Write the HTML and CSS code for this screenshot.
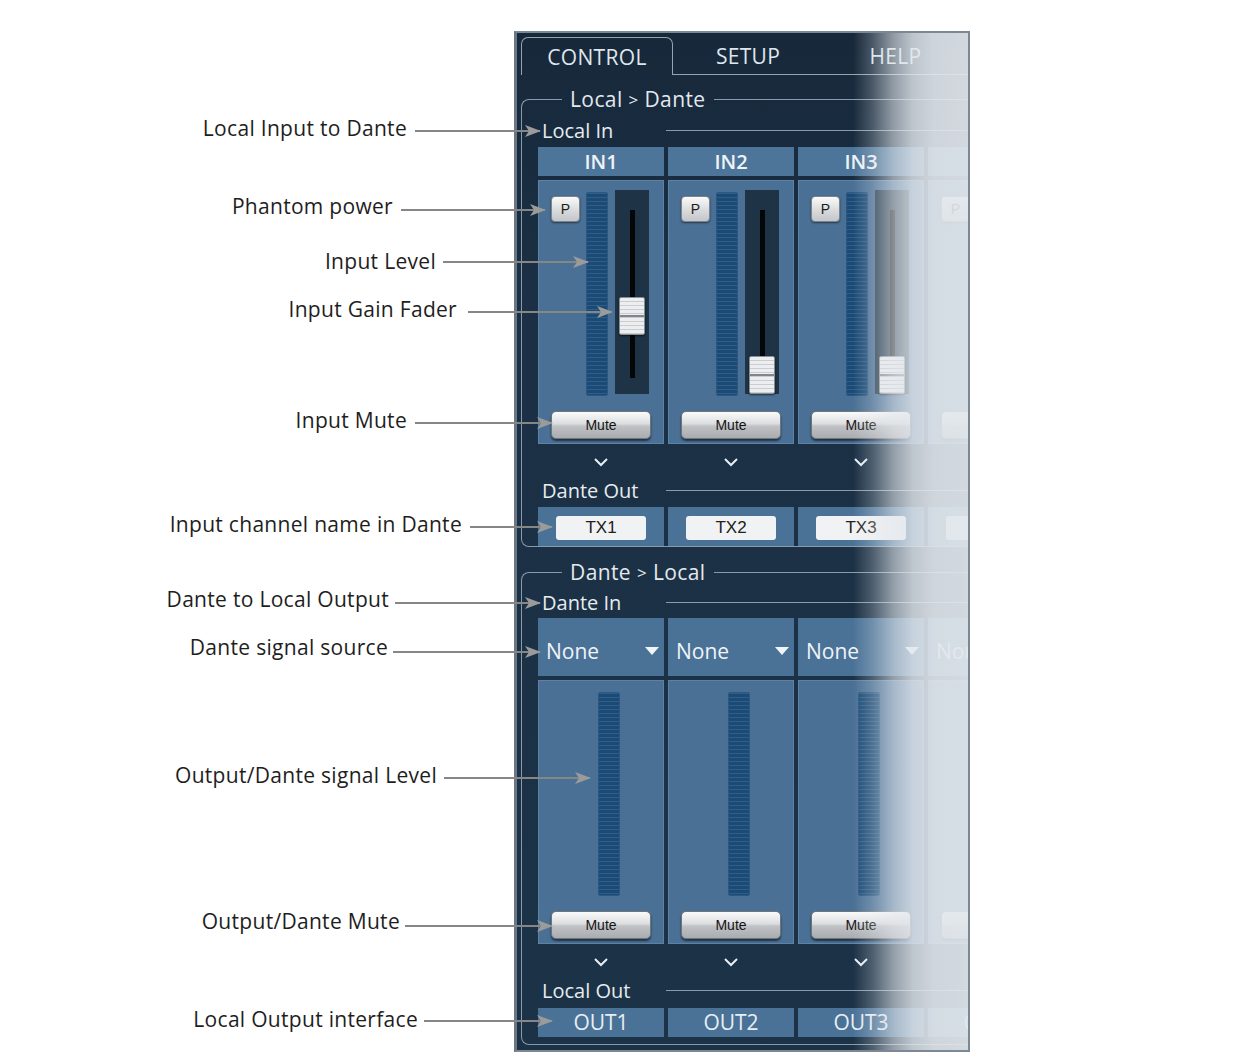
FILE: index.html
```html
<!DOCTYPE html>
<html lang="en">
<head>
    <meta charset="UTF-8">
    <title>Dante Interface - Control</title>
    <link rel="stylesheet" href="styles.css">
</head>
<body>
<div class="stage">
    <div class="panel">
        <!-- Tab bar -->
        <div class="tabs">
            <div class="tab active">CONTROL</div>
            <div class="tab">SETUP</div>
            <div class="tab">HELP</div>
        </div>

        <!-- Local inputs sent to the network -->
        <fieldset class="group">
            <legend>Local <span class="gt">&gt;</span> Dante</legend>
            <div class="section"><span>Local In</span></div>
            <div class="row heads">
                <div class="cell head">IN1</div>
                <div class="cell head">IN2</div>
                <div class="cell head">IN3</div>
                <div class="cell head">IN4</div>
            </div>
            <div class="row strips">
                <div class="cell strip">
                    <div class="strip-top">
                        <button class="phantom">P</button>
                        <div class="meter"></div>
                        <div class="fader"><div class="knob" style="top:107px"></div></div>
                    </div>
                    <button class="mute">Mute</button>
                </div>
                <div class="cell strip">
                    <div class="strip-top">
                        <button class="phantom">P</button>
                        <div class="meter"></div>
                        <div class="fader"><div class="knob" style="top:166px"></div></div>
                    </div>
                    <button class="mute">Mute</button>
                </div>
                <div class="cell strip">
                    <div class="strip-top">
                        <button class="phantom">P</button>
                        <div class="meter"></div>
                        <div class="fader"><div class="knob" style="top:166px"></div></div>
                    </div>
                    <button class="mute">Mute</button>
                </div>
                <div class="cell strip">
                    <div class="strip-top">
                        <button class="phantom">P</button>
                        <div class="meter"></div>
                        <div class="fader"><div class="knob" style="top:166px"></div></div>
                    </div>
                    <button class="mute">Mute</button>
                </div>
            </div>
            <div class="row chevrons">
                <div class="chev"><svg width="14" height="9"><polyline points="1,1 7,7 13,1"/></svg></div>
                <div class="chev"><svg width="14" height="9"><polyline points="1,1 7,7 13,1"/></svg></div>
                <div class="chev"><svg width="14" height="9"><polyline points="1,1 7,7 13,1"/></svg></div>
                <div class="chev"><svg width="14" height="9"><polyline points="1,1 7,7 13,1"/></svg></div>
            </div>
            <div class="section"><span>Dante Out</span></div>
            <div class="row names">
                <div class="cell name"><div class="txname">TX1</div></div>
                <div class="cell name"><div class="txname">TX2</div></div>
                <div class="cell name"><div class="txname">TX3</div></div>
                <div class="cell name"><div class="txname">TX4</div></div>
            </div>
        </fieldset>

        <!-- Network channels routed to local outputs -->
        <fieldset class="group second">
            <legend>Dante <span class="gt">&gt;</span> Local</legend>
            <div class="section"><span>Dante In</span></div>
            <div class="row sources">
                <div class="cell source"><span>None</span><i class="caret"></i></div>
                <div class="cell source"><span>None</span><i class="caret"></i></div>
                <div class="cell source"><span>None</span><i class="caret"></i></div>
                <div class="cell source"><span>None</span><i class="caret"></i></div>
            </div>
            <div class="row strips">
                <div class="cell strip">
                    <div class="strip-top out"><div class="meter"></div></div>
                    <button class="mute">Mute</button>
                </div>
                <div class="cell strip">
                    <div class="strip-top out"><div class="meter"></div></div>
                    <button class="mute">Mute</button>
                </div>
                <div class="cell strip">
                    <div class="strip-top out"><div class="meter"></div></div>
                    <button class="mute">Mute</button>
                </div>
                <div class="cell strip">
                    <div class="strip-top out"><div class="meter"></div></div>
                    <button class="mute">Mute</button>
                </div>
            </div>
            <div class="row chevrons">
                <div class="chev"><svg width="14" height="9"><polyline points="1,1 7,7 13,1"/></svg></div>
                <div class="chev"><svg width="14" height="9"><polyline points="1,1 7,7 13,1"/></svg></div>
                <div class="chev"><svg width="14" height="9"><polyline points="1,1 7,7 13,1"/></svg></div>
                <div class="chev"><svg width="14" height="9"><polyline points="1,1 7,7 13,1"/></svg></div>
            </div>
            <div class="section"><span>Local Out</span></div>
            <div class="row outs">
                <div class="cell outname">OUT1</div>
                <div class="cell outname">OUT2</div>
                <div class="cell outname">OUT3</div>
                <div class="cell outname">OUT4</div>
            </div>
        </fieldset>

        <div class="fade"></div>
    </div>

    <!-- Callout labels with leader arrows -->
    <svg class="callouts" width="1255" height="1064">
        <defs>
            <marker id="tip" viewBox="0 0 16 12" refX="15" refY="6" markerWidth="16" markerHeight="12" markerUnits="userSpaceOnUse" orient="auto">
                <path d="M0 0 L16 6 L0 12 L4 6 Z"/>
            </marker>
        </defs>
        <g class="labels">
            <text x="407" y="136">Local Input to Dante</text>
            <text x="393" y="214">Phantom power</text>
            <text x="436" y="269">Input Level</text>
            <text x="457" y="317">Input Gain Fader</text>
            <text x="407" y="428">Input Mute</text>
            <text x="462" y="532">Input channel name in Dante</text>
            <text x="389" y="607">Dante to Local Output</text>
            <text x="388" y="655">Dante signal source</text>
            <text x="437" y="783">Output/Dante signal Level</text>
            <text x="400" y="929">Output/Dante Mute</text>
            <text x="418" y="1027">Local Output interface</text>
        </g>
        <g class="leaders">
            <line x1="415" y1="131" x2="540" y2="131"/>
            <line x1="401" y1="210" x2="545" y2="210"/>
            <line x1="443" y1="262" x2="588" y2="262"/>
            <line x1="468" y1="312" x2="612" y2="312"/>
            <line x1="415" y1="423" x2="552" y2="423"/>
            <line x1="470" y1="527" x2="552" y2="527"/>
            <line x1="395" y1="603" x2="540" y2="603"/>
            <line x1="393" y1="652" x2="540" y2="652"/>
            <line x1="444" y1="778" x2="590" y2="778"/>
            <line x1="405" y1="926" x2="552" y2="926"/>
            <line x1="424" y1="1021" x2="552" y2="1021"/>
        </g>
    </svg>
</div>
</body>
</html>
```

FILE: styles.css
```css
body {
    margin: 0;
    background: #ffffff;
    font-family: 'Open Sans', 'Liberation Sans', sans-serif;
}

.stage {
    position: relative;
    width: 1255px;
    height: 1064px;
    padding: 31px 0 0 514px;
    box-sizing: border-box;
}

/* Main panel */
.panel {
    position: relative;
    width: 456px;
    height: 1021px;
    box-sizing: border-box;
    overflow: hidden;
    padding: 4px 0 0 4px;
    border: 2px solid #7c8994;
    border-left: 3px solid #6b7884;
    background: linear-gradient(#17283a 0%, #1b3044 25%, #1c3246 100%);
    color: #e4eaef;
}

.tabs {
    display: flex;
    height: 38px;
}

.tab {
    width: 150px;
    box-sizing: border-box;
    border-bottom: 1px solid #95a4b1;
    font-size: 21px;
    letter-spacing: 0.3px;
    line-height: 38px;
    text-align: center;
    color: #dfe6ec;
}

.tab.active {
    width: 152px;
    border: 1px solid #95a4b1;
    border-bottom: none;
    border-radius: 7px 7px 0 0;
}

.tab:last-child {
    flex: 1;
}

/* Group boxes */
.group {
    width: 480px;
    box-sizing: border-box;
    min-width: 0;
    margin: 12px 0 0 0;
    padding: 6px 0 0 16px;
    border: 1px solid #8a9aa8;
    border-right: none;
    border-radius: 8px 0 0 8px;
}

.group.second {
    margin-top: 13px;
    padding-top: 5px;
    padding-bottom: 7px;
}

.group legend {
    margin-left: 24px;
    padding: 0 8px;
    font-size: 21px;
    letter-spacing: 0.4px;
    line-height: 24px;
    color: #e3e9ee;
}

.gt {
    font-size: 17px;
    vertical-align: 1px;
}

.section {
    display: flex;
    align-items: center;
    height: 24px;
    font-size: 20px;
    color: #e6ecf1;
}

.section span {
    flex: none;
    width: 128px;
    padding-left: 4px;
    box-sizing: border-box;
}

.section::after {
    content: "";
    flex: 1;
    border-top: 1px solid #8a9aa8;
}

/* Channel rows */
.row {
    display: grid;
    grid-template-columns: repeat(4, 126px);
    column-gap: 4px;
}

.cell {
    background: #4a7297;
}

.heads {
    margin-top: 5px;
}

.head {
    height: 29px;
    line-height: 29px;
    text-align: center;
    font-size: 20px;
    font-weight: 600;
    color: #eef3f7;
    background: #4d7599;
}

.strips {
    margin-top: 4px;
}

.strip {
    height: 264px;
    box-sizing: border-box;
    padding: 10px 0 0 13px;
    background: #4a7095;
    box-shadow: inset 0 0 0 1px #5c83a6;
}

.strip-top {
    display: flex;
    align-items: flex-start;
    height: 206px;
}

.strip-top.out {
    justify-content: center;
    padding-left: 15px;
    width: 100px;
    box-sizing: border-box;
}

.phantom {
    width: 29px;
    height: 26px;
    margin-top: 6px;
    padding: 0;
    border: 1px solid #7d848b;
    border-radius: 4px;
    background: linear-gradient(#fafafa, #d6d8da 60%, #c4c7ca);
    box-shadow: 0 1px 2px rgba(0, 0, 0, 0.5);
    font-family: 'Liberation Sans', sans-serif;
    font-size: 14px;
    color: #1c1c1c;
}

.meter {
    width: 22px;
    height: 204px;
    margin: 2px 0 0 6px;
    box-sizing: border-box;
    border: 1px solid #2b5781;
    border-radius: 2px;
    background: repeating-linear-gradient(to bottom, #2c5f8c 0 1px, #1d4a74 1px 4px);
}

.strip-top.out .meter {
    margin-left: 0;
}

.fader {
    position: relative;
    width: 34px;
    height: 204px;
    margin-left: 7px;
    background: #1e3446;
}

.fader::before {
    content: "";
    position: absolute;
    left: 15px;
    top: 20px;
    width: 5px;
    height: 168px;
    background: #050607;
}

.knob {
    position: absolute;
    left: 4px;
    width: 26px;
    height: 38px;
    box-sizing: border-box;
    border: 1px solid #8a8f94;
    border-radius: 2px;
    background:
        linear-gradient(to bottom, transparent 48%, #80858a 48%, #80858a 53%, transparent 53%),
        repeating-linear-gradient(to bottom, #eceef0 0 3px, #c9ccd0 3px 4px);
    box-shadow: 0 1px 2px rgba(0, 0, 0, 0.6);
}

.mute {
    display: block;
    width: 100px;
    height: 28px;
    margin-top: 15px;
    padding: 0;
    border: 1px solid #6f757b;
    border-radius: 5px;
    background: linear-gradient(#fbfbfb, #dcdddf 45%, #bfc1c4 55%, #a9acb0);
    box-shadow: 0 2px 2px rgba(0, 0, 0, 0.55);
    font-family: 'Liberation Sans', sans-serif;
    font-size: 14px;
    color: #141414;
}

.chevrons {
    height: 34px;
}

.chev {
    display: flex;
    justify-content: center;
    align-items: center;
    padding-top: 3px;
}

.chev polyline {
    fill: none;
    stroke: #e8eef3;
    stroke-width: 2;
}

.names {
    margin-top: 5px;
}

.name {
    height: 39px;
    display: flex;
    justify-content: center;
    align-items: center;
    padding-top: 2px;
    box-sizing: border-box;
}

.txname {
    width: 90px;
    height: 24px;
    line-height: 24px;
    border-radius: 3px;
    background: #f1f2f3;
    text-align: center;
    font-family: 'Liberation Sans', sans-serif;
    font-size: 17px;
    color: #202020;
}

.sources {
    margin-top: 4px;
}

.source {
    height: 58px;
    box-sizing: border-box;
    display: flex;
    align-items: center;
    justify-content: space-between;
    padding: 7px 5px 0 8px;
    font-size: 21px;
    color: #f0f4f7;
}

.caret {
    width: 0;
    height: 0;
    border-left: 7px solid transparent;
    border-right: 7px solid transparent;
    border-top: 8px solid #f2f5f8;
}

.outs {
    margin-top: 6px;
}

.outname {
    height: 29px;
    line-height: 29px;
    text-align: center;
    font-size: 21px;
    color: #e8eef3;
    background: #4a7297;
}

/* Right edge washes out into the page */
.fade {
    position: absolute;
    top: 0;
    right: 0;
    bottom: 0;
    width: 115px;
    background: linear-gradient(to right,
        rgba(226, 231, 236, 0) 0%,
        rgba(226, 231, 236, 0.25) 17%,
        rgba(226, 231, 236, 0.6) 35%,
        rgba(226, 231, 236, 0.82) 52%,
        rgba(226, 231, 236, 0.9) 70%,
        rgba(226, 231, 236, 0.92) 100%);
}

/* Callouts */
.callouts {
    position: absolute;
    top: 0;
    left: 0;
    pointer-events: none;
}

.labels text {
    font-family: 'Open Sans', sans-serif;
    font-size: 21px;
    letter-spacing: 0.3px;
    text-anchor: end;
    fill: #1e1e1e;
}

.leaders line {
    stroke: #868686;
    stroke-width: 2;
    marker-end: url(#tip);
}

#tip path {
    fill: #9b9b9b;
}
```
